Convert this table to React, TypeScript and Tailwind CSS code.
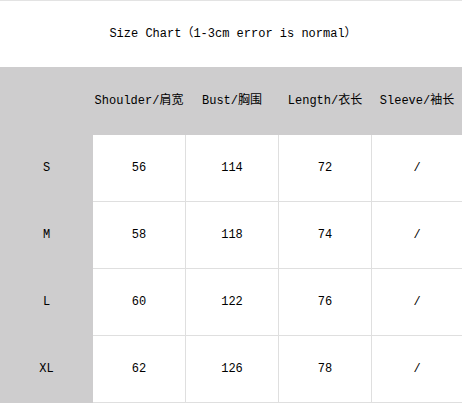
export default function App() {
  const headers = ["Shoulder/肩宽", "Bust/胸围", "Length/衣长", "Sleeve/袖长"];
  const rows = [
    { size: "S", values: ["56", "114", "72", "/"] },
    { size: "M", values: ["58", "118", "74", "/"] },
    { size: "L", values: ["60", "122", "76", "/"] },
    { size: "XL", values: ["62", "126", "78", "/"] },
  ];

  return (
    <div className="w-[462px] h-[403px] bg-white text-[12px] text-black overflow-hidden font-['Liberation_Mono','Noto_Sans_CJK_SC',monospace]">
      {/* top rule */}
      <div className="h-px bg-[#e3e3e3]" />

      {/* title */}
      <div className="h-[66px] flex items-center justify-center pl-[4px]">
        Size Chart（1-3cm error is normal）
      </div>

      <div className="flex">
        {/* size column */}
        <div className="w-[93px] bg-[#cecdce] flex flex-col">
          <div className="h-[68px]" />
          {rows.map((r) => (
            <div key={r.size} className="h-[67px] flex items-center justify-center pb-px">
              {r.size}
            </div>
          ))}
        </div>

        <div className="flex-1 flex flex-col">
          {/* header */}
          <div className="h-[68px] bg-[#cecdce] grid grid-cols-[92px_92px_92px_90px] gap-px items-center">
            {headers.map((h) => (
              <div key={h} className="text-center whitespace-nowrap">
                {h}
              </div>
            ))}
          </div>

          {/* values */}
          <div className="grid grid-cols-[92px_92px_92px_90px] auto-rows-[66px] gap-px pb-px bg-[#dfdfdf]">
            {rows.map((r) =>
              r.values.map((v, j) => (
                <div key={r.size + j} className="bg-white flex items-center justify-center">
                  {v}
                </div>
              ))
            )}
          </div>
        </div>
      </div>
    </div>
  );
}
